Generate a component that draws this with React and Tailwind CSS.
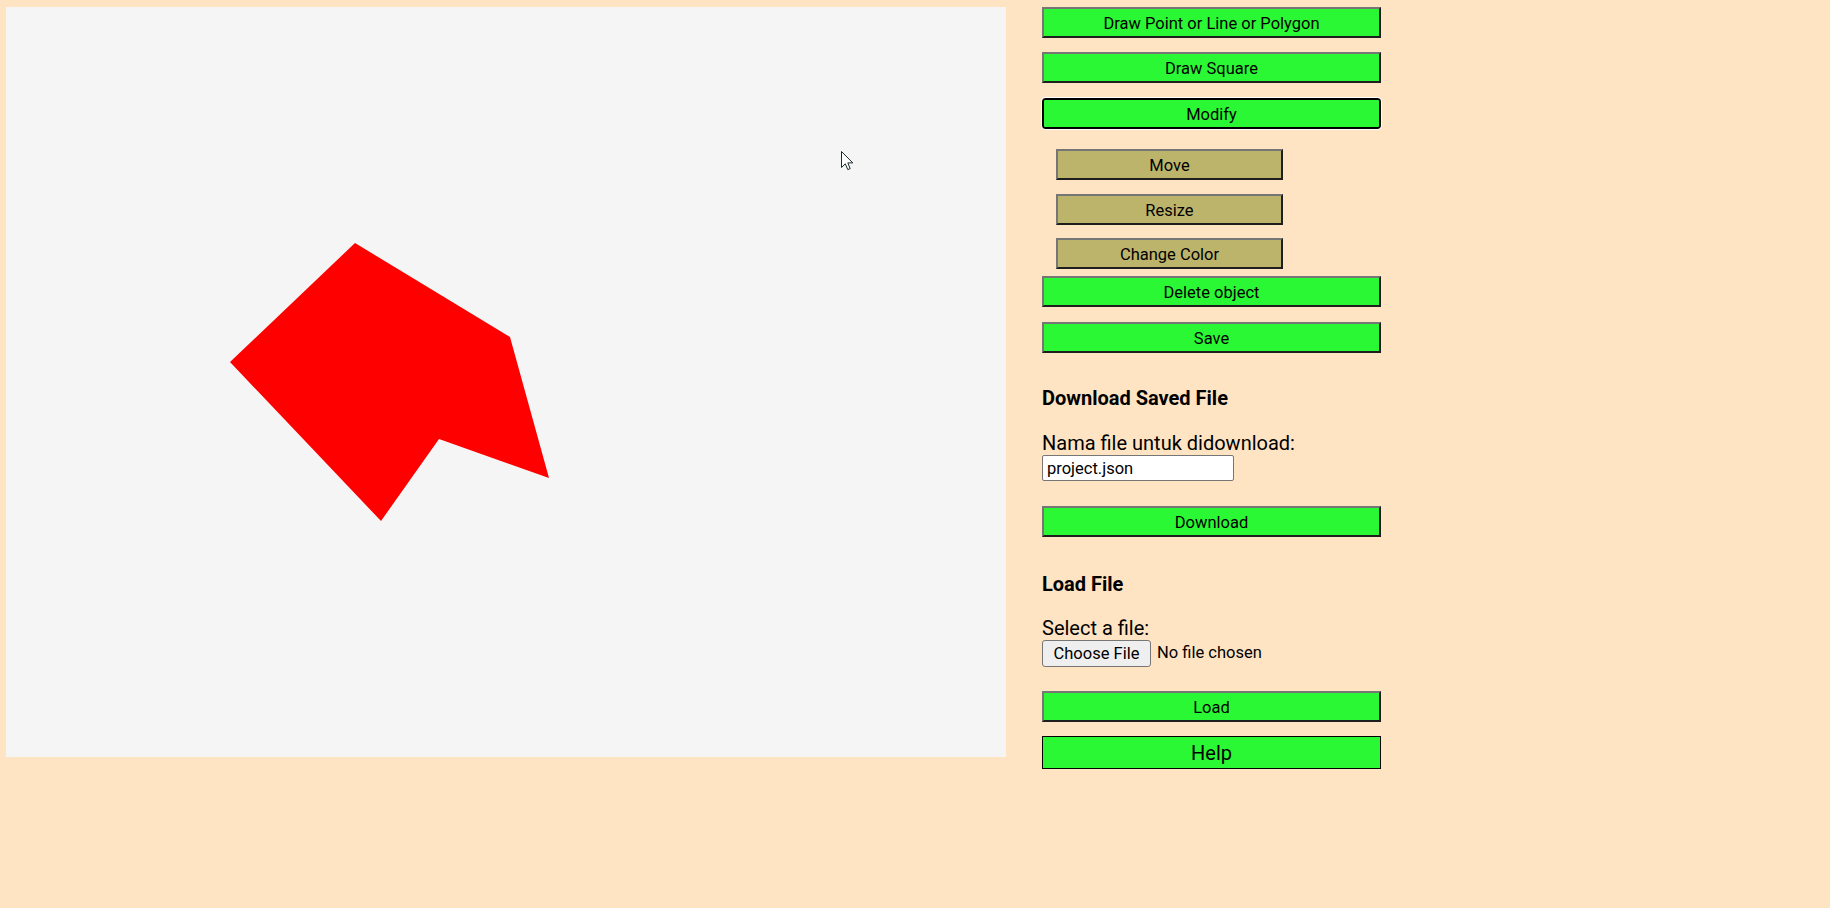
import React from "react";

const green =
  "w-[339px] h-[31px] pt-[3px] bg-[#2bf834] border-2 border-t-[#767676] border-l-[#767676] border-b-[#1e1e1e] border-r-[#1e1e1e] text-[16.5px] text-black flex items-center justify-center leading-none";
const khaki =
  "w-[227px] h-[31px] pt-[3px] ml-[14px] bg-[#bdb46b] border-2 border-t-[#767676] border-l-[#767676] border-b-[#1e1e1e] border-r-[#1e1e1e] text-[16.5px] text-black flex items-center justify-center leading-none";

export default function App() {
  return (
    <div
      className="w-[1830px] h-[908px] bg-[#ffe4c4] flex items-start pl-[6px] pt-[7px]"
      style={{ fontFamily: "Roboto, 'Liberation Sans', sans-serif" }}
    >
      <div className="relative w-[1000px] h-[750px] bg-[#f5f5f5] shrink-0">
        <svg width="1000" height="750" className="block">
          <polygon
            points="349,236 504,330 543,471 433,432 375,514 224,355"
            fill="#ff0000"
          />
        </svg>
        <svg
          className="absolute left-[835px] top-[144px]"
          width="13"
          height="20"
          viewBox="0 0 13 20"
        >
          <path
            d="M0.5 0.5 L0.5 16.5 L4.3 12.8 L6.8 18.6 L9.2 17.6 L6.8 11.9 L11.8 11.9 Z"
            fill="#ffffff"
            stroke="#1a2a2a"
            strokeWidth="1"
            strokeLinejoin="miter"
          />
        </svg>
      </div>

      <div className="ml-[36px] w-[339px] flex flex-col items-start">
        <button className={green}>Draw Point or Line or Polygon</button>
        <button className={green + " mt-[14px]"}>Draw Square</button>
        <button className="mt-[15px] w-[339px] h-[31px] pt-[3px] bg-[#2bf834] border-2 border-black rounded-[3px] outline outline-1 outline-white text-[16.5px] text-black flex items-center justify-center leading-none">
          Modify
        </button>
        <button className={khaki + " mt-[20px]"}>Move</button>
        <button className={khaki + " mt-[14px]"}>Resize</button>
        <button className={khaki + " mt-[13px]"}>Change Color</button>
        <button className={green + " mt-[7px]"}>Delete object</button>
        <button className={green + " mt-[15px]"}>Save</button>

        <div className="mt-[34px] text-[20px] font-bold leading-[23px] text-black">
          Download Saved File
        </div>
        <div className="mt-[22px] text-[20px] leading-[23px] text-black">
          Nama file untuk didownload:
        </div>
        <input
          readOnly
          value="project.json"
          className="mt-0 w-[192px] h-[26px] bg-white border border-[#767676] rounded-[2px] px-[4px] text-[16.5px] text-black outline-none"
        />
        <button className={green + " mt-[25px]"}>Download</button>

        <div className="mt-[36px] text-[20px] font-bold leading-[23px] text-black">
          Load File
        </div>
        <div className="mt-[21px] text-[20px] leading-[23px] text-black">
          Select a file:
        </div>
        <div className="mt-0 flex items-center">
          <span className="w-[109px] h-[27px] pt-[1px] bg-[#efefef] border border-[#767676] rounded-[3px] text-[16.5px] text-black flex items-center justify-center leading-none">
            Choose File
          </span>
          <span className="ml-[6px] text-[16.5px] text-black">No file chosen</span>
        </div>
        <button className={green + " mt-[24px]"}>Load</button>
        <button className="mt-[14px] w-[339px] h-[33px] pt-[1px] bg-[#2bf834] border border-black text-[20px] text-black flex items-center justify-center leading-none">
          Help
        </button>
      </div>
    </div>
  );
}
